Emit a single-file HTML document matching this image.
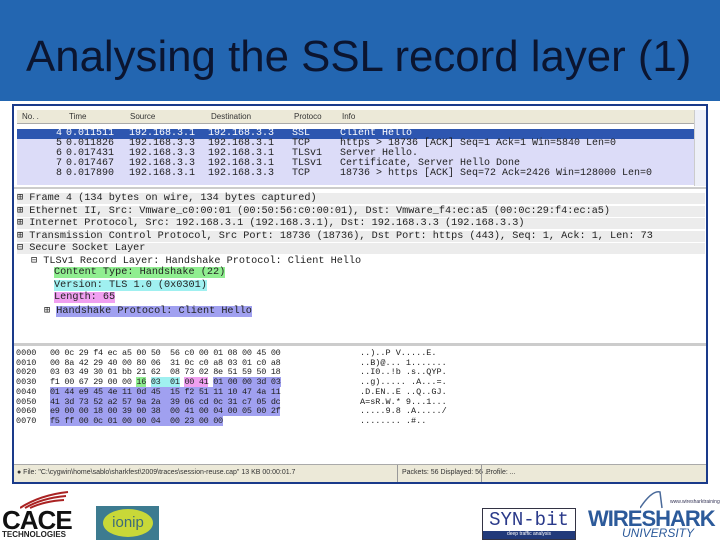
<!DOCTYPE html>
<html><head><style>
*{margin:0;padding:0;box-sizing:border-box}
body{width:720px;height:540px;background:#fff;position:relative;overflow:hidden;font-family:"Liberation Sans",sans-serif}
.band{position:absolute;left:0;top:0;width:720px;height:101px;background:#2366b1}
.title{position:absolute;left:26px;top:32px;font-size:43.8px;color:#0b1530;white-space:nowrap}
.win{position:absolute;left:12px;top:104px;width:696px;height:380px;border:2px solid #1a3a8a;background:#fff}
.m{font-family:"Liberation Mono",monospace;font-size:10.2px;white-space:pre;position:absolute;color:#222}
.hdr{position:absolute;left:3px;top:4px;width:677px;height:14px;background:#ece9d8;border-bottom:1px solid #aaa;font-size:8px;color:#333}
.hdr span{position:absolute;top:2px}
.row{position:absolute;left:3px;width:677px;height:9.5px;background:#dcdcf8}
.sel{background:#2d56b0}
.pl{position:absolute;left:0;height:10px;width:680px;font-family:"Liberation Mono",monospace;font-size:10px;line-height:10px;white-space:pre;color:#222}
.pl span{position:absolute;top:0}
.d{position:absolute;left:3px;width:688px;height:11px;background:#ececec}
.hx{font-family:"Liberation Mono",monospace;font-size:8.5px;white-space:pre;position:absolute;color:#222;line-height:9.7px}
</style></head><body>
<div class="band"></div>
<div class="title">Analysing the SSL record layer (1)</div>
<div class="win">
 <div class="hdr"><span style="left:5px">No. .</span><span style="left:52px">Time</span><span style="left:113px">Source</span><span style="left:194px">Destination</span><span style="left:277px">Protoco</span><span style="left:325px">Info</span></div>
 <div style="position:absolute;left:680px;top:4px;width:12px;height:76px;background:#eef0f8;border-left:1px solid #ccc"></div>
 <div class="row sel" style="top:23px"></div>
 <div class="row" style="top:33px"></div>
 <div class="row" style="top:43px"></div>
 <div class="row" style="top:53px"></div>
 <div class="row" style="top:63px"></div>
 <div class="row" style="top:73px;height:6px"></div>
 <div class="pl" style="top:23px;color:#fff"><span style="left:42px">4</span><span style="left:52px">0.011511</span><span style="left:115px">192.168.3.1</span><span style="left:194px">192.168.3.3</span><span style="left:278px">SSL</span><span style="left:326px">Client Hello</span></div>
 <div class="pl" style="top:33px"><span style="left:42px">5</span><span style="left:52px">0.011826</span><span style="left:115px">192.168.3.3</span><span style="left:194px">192.168.3.1</span><span style="left:278px">TCP</span><span style="left:326px">https &gt; 18736 [ACK] Seq=1 Ack=1 Win=5840 Len=0</span></div>
 <div class="pl" style="top:43px"><span style="left:42px">6</span><span style="left:52px">0.017431</span><span style="left:115px">192.168.3.3</span><span style="left:194px">192.168.3.1</span><span style="left:278px">TLSv1</span><span style="left:326px">Server Hello.</span></div>
 <div class="pl" style="top:53px"><span style="left:42px">7</span><span style="left:52px">0.017467</span><span style="left:115px">192.168.3.3</span><span style="left:194px">192.168.3.1</span><span style="left:278px">TLSv1</span><span style="left:326px">Certificate, Server Hello Done</span></div>
 <div class="pl" style="top:63px"><span style="left:42px">8</span><span style="left:52px">0.017890</span><span style="left:115px">192.168.3.1</span><span style="left:194px">192.168.3.3</span><span style="left:278px">TCP</span><span style="left:326px">18736 &gt; https [ACK] Seq=72 Ack=2426 Win=128000 Len=0</span></div>
 <div style="position:absolute;left:0;top:81px;width:692px;height:2px;background:#ccc"></div>
 <div class="d" style="top:87px"></div><div class="d" style="top:99.5px"></div><div class="d" style="top:112px"></div><div class="d" style="top:124.5px"></div><div class="d" style="top:137px"></div>
 <div class="m" style="left:3px;top:86px">⊞ Frame 4 (134 bytes on wire, 134 bytes captured)</div>
 <div class="m" style="left:3px;top:98.5px">⊞ Ethernet II, Src: Vmware_c0:00:01 (00:50:56:c0:00:01), Dst: Vmware_f4:ec:a5 (00:0c:29:f4:ec:a5)</div>
 <div class="m" style="left:3px;top:111px">⊞ Internet Protocol, Src: 192.168.3.1 (192.168.3.1), Dst: 192.168.3.3 (192.168.3.3)</div>
 <div class="m" style="left:3px;top:123.5px">⊞ Transmission Control Protocol, Src Port: 18736 (18736), Dst Port: https (443), Seq: 1, Ack: 1, Len: 73</div>
 <div class="m" style="left:3px;top:136px">⊟ Secure Socket Layer</div>
 <div class="m" style="left:17px;top:148.5px">⊟ TLSv1 Record Layer: Handshake Protocol: Client Hello</div>
 <div class="m" style="left:40px;top:161px;background:#90ee90">Content Type: Handshake (22)</div>
 <div class="m" style="left:40px;top:173.5px;background:#a0f0f0">Version: TLS 1.0 (0x0301)</div>
 <div class="m" style="left:40px;top:186px;background:#f0a0f0">Length: 65</div>
 <div class="m" style="left:30px;top:198.5px">⊞ <span style="background:#a0a0f0">Handshake Protocol: Client Hello</span></div>
 <div style="position:absolute;left:0;top:237px;width:692px;height:3px;background:#ccc"></div>
 <div class="hx" style="left:2px;top:243px">0000
0010
0020
0030
0040
0050
0060
0070</div>
 <div class="hx" style="left:36px;top:243px;letter-spacing:-0.3px">00 0c 29 f4 ec a5 00 50  56 c0 00 01 08 00 45 00
00 8a 42 29 40 00 80 06  31 0c c0 a8 03 01 c0 a8
03 03 49 30 01 bb 21 62  08 73 02 8e 51 59 50 18
f1 00 67 29 00 00 <span style="background:#90ee90">16</span> <span style="background:#a0f0f0">03  01</span> <span style="background:#f0a0f0">00 41</span> <span style="background:#a0a0f0">01 00 00 3d 03</span>
<span style="background:#a0a0f0">01 44 e9 45 4e 11 0d 45  15 f2 51 11 10 47 4a 11</span>
<span style="background:#a0a0f0">41 3d 73 52 a2 57 9a 2a  39 06 cd 0c 31 c7 05 dc</span>
<span style="background:#a0a0f0">e9 00 00 18 00 39 00 38  00 41 00 04 00 05 00 2f</span>
<span style="background:#a0a0f0">f5 ff 00 0c 01 00 00 04  00 23 00 00</span></div>
 <div class="hx" style="left:346px;top:243px">..)..P V.....E.
..B)@... 1.......
..I0..!b .s..QYP.
..g)..... .A...=.
.D.EN..E ..Q..GJ.
A=sR.W.* 9...1...
.....9.8 .A...../
........ .#..</div>
 <div style="position:absolute;left:0;top:358px;width:692px;height:18px;background:#ece9d8;border-top:1px solid #aaa;font-size:7px;color:#333">
  <span style="position:absolute;left:3px;top:4px">● File: "C:\cygwin\home\sablo\sharkfest\2009\traces\session-reuse.cap" 13 KB 00:00:01.7</span>
  <span style="position:absolute;left:383px;top:0;height:17px;border-left:1px solid #999"></span>
  <span style="position:absolute;left:388px;top:4px">Packets: 56 Displayed: 56 ...</span>
  <span style="position:absolute;left:467px;top:0;height:17px;border-left:1px solid #999"></span>
  <span style="position:absolute;left:472px;top:4px">Profile: ...</span>
 </div>
</div>
<div style="position:absolute;left:2px;top:505px;font-size:26px;font-weight:bold;color:#111;letter-spacing:-1px">CACE</div>
<div style="position:absolute;left:2px;top:530px;font-size:8px;font-weight:bold;color:#222">TECHNOLOGIES</div>
<svg style="position:absolute;left:20px;top:490px" width="50" height="20"><path d="M0 18 Q20 5 48 2 M5 18 Q22 8 46 6 M10 18 Q25 11 44 10" stroke="#a22" stroke-width="2" fill="none"/></svg>
<div style="position:absolute;left:96px;top:506px;width:63px;height:34px;background:#3d7b90"></div>
<div style="position:absolute;left:103px;top:509px;width:50px;height:28px;border-radius:50%;background:#c8d838;font-size:15px;color:#3d6b7a;text-align:center;line-height:28px">ionip</div>
<div style="position:absolute;left:482px;top:508px;width:94px;height:32px;border:1px solid #334;background:#fff">
 <div style="font-family:'Liberation Mono',monospace;font-size:19px;color:#2a3a8a;text-align:center;line-height:22px">SYN-bit</div>
 <div style="position:absolute;left:0;bottom:0;width:92px;height:8px;background:#223a7a;font-size:5px;color:#fff;text-align:center">deep traffic analysis</div>
</div>
<div style="position:absolute;left:588px;top:506px;font-size:22px;font-weight:bold;color:#2c5a9a;letter-spacing:-1px">WIRESHARK</div>
<div style="position:absolute;left:622px;top:526px;font-size:12px;font-style:italic;color:#2c5a9a">UNIVERSITY</div>
<svg style="position:absolute;left:640px;top:490px" width="80" height="20"><path d="M0 18 Q12 0 20 2 L22 18" stroke="#4a6a9a" stroke-width="1.5" fill="none"/><text x="30" y="13" font-size="5" fill="#335" font-family="Liberation Sans">www.wiresharktraining.com</text></svg>
</body></html>
